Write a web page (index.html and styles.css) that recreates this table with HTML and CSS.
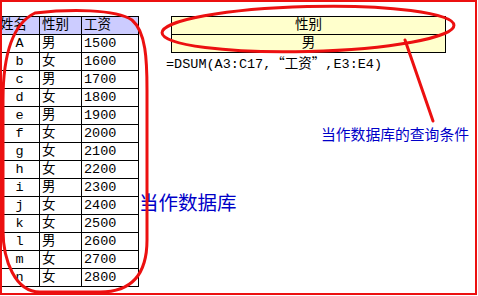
FILE: index.html
```html
<!DOCTYPE html>
<html lang="zh-CN">
<head>
<meta charset="utf-8">
<title>DSUM 示例</title>
<link rel="stylesheet" href="styles.css">
</head>
<body>
<div class="sheet">
  <div class="data" role="table">
    <div class="cell head left">姓名</div><div class="cell head">性别</div><div class="cell head">工资</div>
    <div class="cell mid">A</div><div class="cell">男</div><div class="cell">1500</div>
    <div class="cell mid">b</div><div class="cell">女</div><div class="cell">1600</div>
    <div class="cell mid">c</div><div class="cell">男</div><div class="cell">1700</div>
    <div class="cell mid">d</div><div class="cell">女</div><div class="cell">1800</div>
    <div class="cell mid">e</div><div class="cell">男</div><div class="cell">1900</div>
    <div class="cell mid">f</div><div class="cell">女</div><div class="cell">2000</div>
    <div class="cell mid">g</div><div class="cell">女</div><div class="cell">2100</div>
    <div class="cell mid">h</div><div class="cell">女</div><div class="cell">2200</div>
    <div class="cell mid">i</div><div class="cell">男</div><div class="cell">2300</div>
    <div class="cell mid">j</div><div class="cell">女</div><div class="cell">2400</div>
    <div class="cell mid">k</div><div class="cell">女</div><div class="cell">2500</div>
    <div class="cell mid">l</div><div class="cell">男</div><div class="cell">2600</div>
    <div class="cell mid">m</div><div class="cell">女</div><div class="cell">2700</div>
    <div class="cell mid">n</div><div class="cell">女</div><div class="cell">2800</div>
  </div>
  <div class="side">
    <div class="criteria" role="table">
      <div class="crit">性别</div>
      <div class="crit">男</div>
    </div>
    <div class="formula">=DSUM(A3:C17,<span class="q">“</span>工资<span class="q">”</span>,E3:E4)</div>
  </div>
</div>

<div class="note note-db">当作数据库</div>
<div class="note note-crit">当作数据库的查询条件</div>

<svg class="marks" width="478" height="296" viewBox="0 0 478 296" aria-hidden="true">
  <!-- ring around the data range -->
  <path d="M35 13 C70 9 115 9 132 20 C146 32 147 60 147 90 L147 240 C147 270 135 292 100 292 L40 292 C15 292 3 260 3 230 L3 100 C3 60 10 25 35 13 Z"/>
  <!-- ring around the criteria range -->
  <ellipse cx="308" cy="29" rx="146" ry="22.5" transform="rotate(-1.5 308 29)"/>
  <!-- pointer to the criteria note -->
  <line x1="405" y1="40" x2="433" y2="121"/>
</svg>
<div class="frame"></div>
</body>
</html>
```

FILE: styles.css
```css
html, body {
  margin: 0;
  padding: 0;
  background: #fff;
}

body {
  position: relative;
  width: 478px;
  height: 296px;
  overflow: hidden;
  font-family: "Liberation Mono", "Noto Sans CJK SC", monospace;
  font-size: 13.5px;
  color: #000;
}

.sheet {
  display: flex;
  align-items: flex-start;
  padding-top: 16px;
}

/* data range: grid lines come from the black background showing through the gaps */
.data {
  display: grid;
  grid-template-columns: 39px 41px 56px;
  grid-auto-rows: 17px;
  gap: 1px;
  background: #000;
  border: 1px solid #000;
  margin-left: -1px;
}

.cell {
  background: #fff;
  line-height: 17px;
  padding-left: 2px;
  white-space: nowrap;
  overflow: hidden;
}

.cell.head {
  background: #ccccff;
}

.cell.left {
  padding-left: 0;
}

.cell.mid {
  padding-left: 0;
  text-align: center;
}

.side {
  display: flex;
  flex-direction: column;
  margin-left: 27px;
}

.criteria {
  display: grid;
  grid-auto-rows: 17px;
  gap: 1px;
  width: 273px;
  margin-left: 5px;
  background: #000;
  border: 1px solid #000;
}

.crit {
  background: #ffffcc;
  line-height: 17px;
  text-align: center;
}

.formula {
  line-height: 17px;
  padding-top: 1px;
  white-space: nowrap;
}

/* full-width quote marks, as in a CJK system font */
.formula .q {
  font-family: "Noto Sans CJK SC", sans-serif;
}

.note {
  position: absolute;
  font-family: "Noto Sans CJK SC", sans-serif;
  color: #0000c8;
  line-height: 1;
  white-space: nowrap;
}

.note-db {
  left: 139px;
  top: 192px;
  font-size: 19.5px;
}

.note-crit {
  left: 321px;
  top: 127px;
  font-size: 14.8px;
}

.marks {
  position: absolute;
  left: 0;
  top: 0;
  fill: none;
  stroke: #ec1010;
  stroke-width: 3;
  stroke-linecap: round;
  pointer-events: none;
}

.frame {
  position: absolute;
  left: 0;
  top: 0;
  width: 477px;
  height: 295px;
  box-sizing: border-box;
  border: 2px solid #ec1010;
  pointer-events: none;
}
```
